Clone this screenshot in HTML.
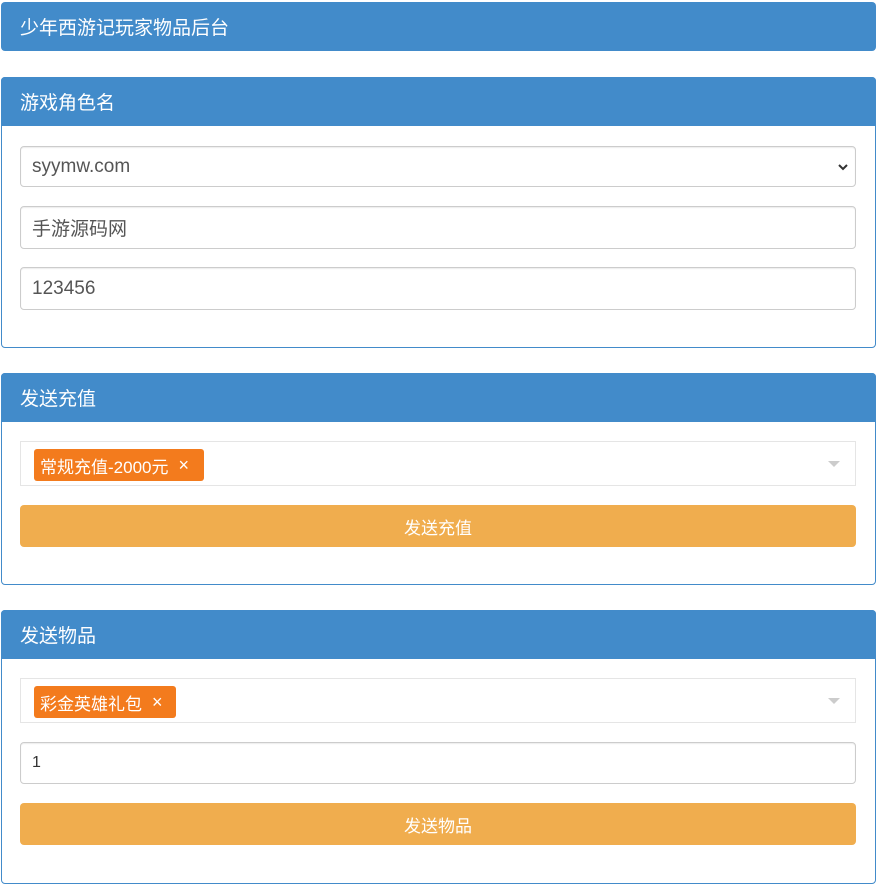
<!DOCTYPE html>
<html><head><meta charset="utf-8"><style>
body{margin:0;background:#fff;font-family:"Liberation Sans","Noto Sans CJK SC",sans-serif;width:877px;height:886px;position:relative;overflow:hidden}
.a{position:absolute;box-sizing:border-box}
.hd{background:#428bca;color:#fff;font-size:19px;padding-left:19px;display:flex;align-items:center}
.pn{border:1px solid #428bca;border-radius:4px}
.in{border:1px solid #ccc;border-radius:4px;left:20px;width:836px;color:#555;font-size:19px;padding-left:11px;display:flex;align-items:center;box-shadow:inset 0 1px 1px rgba(0,0,0,.075)}
.sel{border:1px solid #e5e5e5;left:20px;width:836px}
.tag{background:#f37b1d;color:#fff;font-size:17px;border-radius:3px;display:flex;align-items:center;padding-left:6px}
.btn{background:#f0ad4e;color:#fff;border-radius:4px;left:20px;width:836px;font-size:17px;display:flex;align-items:center;justify-content:center}
.car{width:0;height:0;border-left:6px solid transparent;border-right:6px solid transparent;border-top:6px solid #ccc}
</style></head><body>
<div class="a hd" style="left:1px;top:2px;width:875px;height:49px;border-radius:4px">少年西游记玩家物品后台</div>

<div class="a pn" style="left:1px;top:77px;width:875px;height:271px"></div>
<div class="a hd" style="left:1px;top:77px;width:875px;height:49px;border-radius:4px 4px 0 0">游戏角色名</div>
<div class="a in" style="top:146px;height:41px">syymw.com<svg style="position:absolute;right:6px;top:15px" width="12" height="10" viewBox="0 0 12 10"><path d="M2 3l4 4 4-4" stroke="#333" stroke-width="2" fill="none"/></svg></div>
<div class="a in" style="top:206px;height:43px">手游源码网</div>
<div class="a in" style="top:267px;height:43px">123456</div>

<div class="a pn" style="left:1px;top:373px;width:875px;height:212px"></div>
<div class="a hd" style="left:1px;top:373px;width:875px;height:49px;border-radius:4px 4px 0 0">发送充值</div>
<div class="a sel" style="top:441px;height:45px"></div>
<div class="a tag" style="left:34px;top:449px;width:170px;height:32px">常规充值-2000元<span style="margin-left:10px;font-size:18px">×</span></div>
<div class="a car" style="left:828px;top:461px"></div>
<div class="a btn" style="top:505px;height:42px">发送充值</div>

<div class="a pn" style="left:1px;top:610px;width:875px;height:274px"></div>
<div class="a hd" style="left:1px;top:610px;width:875px;height:49px;border-radius:4px 4px 0 0">发送物品</div>
<div class="a sel" style="top:678px;height:45px"></div>
<div class="a tag" style="left:34px;top:686px;width:142px;height:32px">彩金英雄礼包<span style="margin-left:10px;font-size:18px">×</span></div>
<div class="a car" style="left:828px;top:698px"></div>
<div class="a in" style="top:742px;height:42px;font-size:16px;color:#333">1</div>
<div class="a btn" style="top:803px;height:42px">发送物品</div>
</body></html>
